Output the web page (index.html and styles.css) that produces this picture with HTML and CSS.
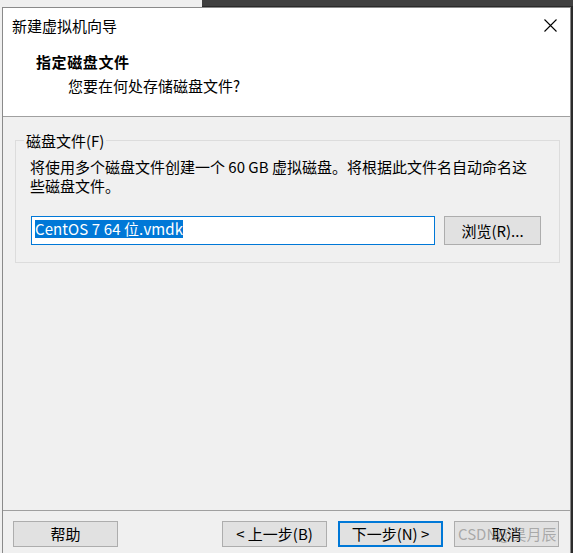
FILE: index.html
```html
<!DOCTYPE html>
<html lang="zh-CN">
<head>
<meta charset="utf-8">
<title>新建虚拟机向导</title>
<link rel="stylesheet" href="styles.css">
</head>
<body>
<div class="topstrip"><div class="strip-light"></div><div class="strip-dark"></div></div>
<div class="side-left"></div>
<div class="window">
  <div class="titlebar">
    <span class="title">新建虚拟机向导</span>
    <svg class="close" width="13" height="13" viewBox="0 0 13 13"><path d="M0.5 0.5 L12.5 12.5 M12.5 0.5 L0.5 12.5" stroke="#000" stroke-width="1.1" fill="none"/></svg>
  </div>
  <div class="header">
    <div class="h-title">指定磁盘文件</div>
    <div class="h-sub">您要在何处存储磁盘文件?</div>
  </div>
  <div class="content">
    <div class="group">
      <div class="group-label">磁盘文件(F)</div>
      <div class="desc">将使用多个磁盘文件创建一个 60 GB 虚拟磁盘。将根据此文件名自动命名这<br>些磁盘文件。</div>
      <div class="file-row">
        <div class="input"><span class="sel">CentOS 7 64 位.vmdk</span></div>
        <div class="btn browse">浏览(R)...</div>
      </div>
    </div>
  </div>
  <div class="footer">
    <div class="btn">帮助</div>
    <div class="nav">
      <div class="btn">&lt; 上一步(B)</div>
      <div class="btn primary">下一步(N) &gt;</div>
      <div class="btn cancel">取消<span class="watermark">CSDN@昊月辰</span></div>
    </div>
  </div>
</div>
<div class="side-right"></div>
</body>
</html>
```

FILE: styles.css
```css
html, body {
  margin: 0;
  padding: 0;
}
body {
  width: 573px;
  height: 553px;
  overflow: hidden;
  display: grid;
  grid-template-columns: 2px 569px 2px;
  grid-template-rows: 7px 546px;
  font-family: "Microsoft YaHei", "Noto Sans CJK SC", sans-serif;
  font-size: 15px;
  color: #000;
  background: #f0f0f0;
}
.topstrip {
  grid-column: 1 / 4;
  display: flex;
}
.strip-light {
  width: 202px;
  background: #efefef;
}
.strip-dark {
  flex: 1;
  background: #404040;
  border-bottom: 1px solid #2a2a2a;
}
.side-left {
  background: #f0f0f0;
}
.side-right {
  background: #2b2b2b;
}
.window {
  box-sizing: border-box;
  border: 1px solid #8a8a8a;
  border-bottom: none;
  background: #f0f0f0;
  display: flex;
  flex-direction: column;
}
.titlebar {
  height: 36px;
  background: #fff;
  display: flex;
  align-items: center;
  justify-content: space-between;
  padding: 0 13px 0 9px;
}
.title {
  line-height: 20px;
}
.close {
  display: block;
  margin-top: -2px;
}
.header {
  background: #fff;
  padding: 8px 0 0 33px;
  height: 64px;
  border-bottom: 1px solid #a0a0a0;
}
.h-title {
  font-weight: bold;
  line-height: 20px;
  letter-spacing: 0.6px;
}
.h-sub {
  margin-top: 4px;
  padding-left: 32px;
  line-height: 20px;
}
.content {
  flex: 1;
  padding: 23px 10px 0 12px;
}
.group {
  border: 1px solid #dcdcdc;
  padding: 0 16px 17px 14px;
}
.group-label {
  width: fit-content;
  margin: -10px 0 0 -6px;
  padding: 0 2px;
  background: #f0f0f0;
  line-height: 20px;
}
.desc {
  margin-top: 6px;
  line-height: 19px;
  white-space: nowrap;
}
.file-row {
  margin-top: 21px;
  display: flex;
  gap: 9px;
  padding-left: 1px;
}
.input {
  box-sizing: border-box;
  width: 404px;
  height: 29px;
  border: 1px solid #0078d7;
  background: #fff;
  padding: 1px 0 0 3px;
}
.sel {
  display: inline-block;
  background: #0078d7;
  color: #fff;
  line-height: 18px;
  letter-spacing: 0.1px;
}
.btn {
  box-sizing: border-box;
  width: 105px;
  height: 26px;
  border: 1px solid #adadad;
  background: #e1e1e1;
  display: flex;
  align-items: center;
  justify-content: center;
  line-height: 20px;
  position: relative;
}
.browse {
  width: 97px;
  height: 29px;
}
.footer {
  height: 43px;
  box-sizing: border-box;
  border-top: 1px solid #a0a0a0;
  padding: 10px 11px 0 10px;
  display: flex;
  justify-content: space-between;
}
.nav {
  display: flex;
  gap: 11px;
}
.primary {
  border: 2px solid #0078d7;
}
.watermark {
  position: absolute;
  left: 3px;
  top: 2px;
  line-height: 20px;
  color: rgba(120, 120, 120, 0.55);
  white-space: nowrap;
}
```
